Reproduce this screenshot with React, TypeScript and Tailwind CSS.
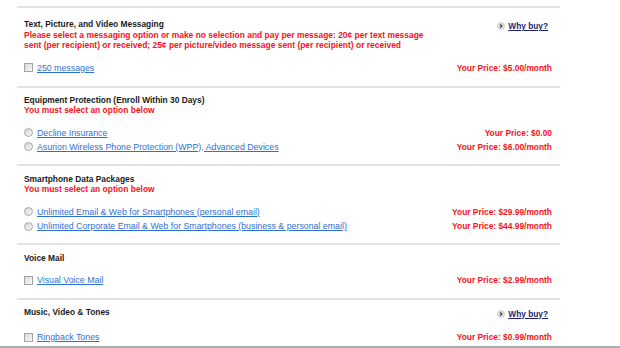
import type { ReactNode } from 'react';

type Option = { label: string; price: string };

type Section = {
  title: string;
  notice?: string[];
  whyBuy?: boolean;
  kind: 'checkbox' | 'radio';
  pad: string;
  rowsMt: string;
  rowsGap: string;
  options: Option[];
};

const sections: Section[] = [
  {
    title: 'Text, Picture, and Video Messaging',
    notice: [
      'Please select a messaging option or make no selection and pay per message: 20¢ per text message',
      'sent (per recipient) or received; 25¢ per picture/video message sent (per recipient) or received',
    ],
    whyBuy: true,
    kind: 'checkbox',
    pad: 'pt-[11px] pb-[12px]',
    rowsMt: 'mt-[11px]',
    rowsGap: 'gap-[2px]',
    options: [{ label: '250 messages', price: 'Your Price: $5.00/month' }],
  },
  {
    title: 'Equipment Protection (Enroll Within 30 Days)',
    notice: ['You must select an option below'],
    kind: 'radio',
    pad: 'pt-[7px] pb-[11px]',
    rowsMt: 'mt-[11px]',
    rowsGap: 'gap-[2px]',
    options: [
      { label: 'Decline Insurance', price: 'Your Price: $0.00' },
      { label: 'Asurion Wireless Phone Protection (WPP), Advanced Devices', price: 'Your Price: $6.00/month' },
    ],
  },
  {
    title: 'Smartphone Data Packages',
    notice: ['You must select an option below'],
    kind: 'radio',
    pad: 'pt-[8px] pb-[11px]',
    rowsMt: 'mt-[11px]',
    rowsGap: 'gap-[2.5px]',
    options: [
      { label: 'Unlimited Email & Web for Smartphones (personal email)', price: 'Your Price: $29.99/month' },
      {
        label: 'Unlimited Corporate Email & Web for Smartphones (business & personal email)',
        price: 'Your Price: $44.99/month',
      },
    ],
  },
  {
    title: 'Voice Mail',
    kind: 'checkbox',
    pad: 'pt-[8px] pb-[11.5px]',
    rowsMt: 'mt-[10.5px]',
    rowsGap: 'gap-[2px]',
    options: [{ label: 'Visual Voice Mail', price: 'Your Price: $2.99/month' }],
  },
  {
    title: 'Music, Video & Tones',
    whyBuy: true,
    kind: 'checkbox',
    pad: 'pt-[7px] pb-[2px]',
    rowsMt: 'mt-[12px]',
    rowsGap: 'gap-[2px]',
    options: [{ label: 'Ringback Tones', price: 'Your Price: $0.99/month' }],
  },
];

function Control({ kind }: { kind: 'checkbox' | 'radio' }) {
  if (kind === 'radio') {
    return (
      <span className="block w-[9px] h-[9px] shrink-0 rounded-full border border-[#a9a9a9] bg-linear-to-br from-[#d6d6d6] to-[#f7f7f7]" />
    );
  }
  return (
    <span className="block w-[9px] h-[9px] shrink-0 border border-[#a4a4a4] bg-linear-to-br from-[#dadada] to-[#f8f8f8]" />
  );
}

function WhyBuy() {
  return (
    <a href="#" className="flex items-center gap-[3px] mt-[2px] mr-[4px]">
      <svg width="8" height="8" viewBox="0 0 8 8">
        <circle cx="4" cy="4" r="3.6" fill="#dedede" stroke="#c4c4c4" strokeWidth="0.6" />
        <path d="M3.1 2.3 L4.9 4 L3.1 5.7" fill="none" stroke="#333" strokeWidth="1.1" />
      </svg>
      <span className="text-[8.3px] leading-[10.5px] font-bold text-[#1e1e74] underline">Why buy?</span>
    </a>
  );
}

function Divider() {
  return <div className="h-[2px] bg-[#e2e2e2]" />;
}

function SectionBlock({ s }: { s: Section }) {
  return (
    <div className={`pl-[7px] pr-[8px] ${s.pad}`}>
      <div className="flex justify-between items-start">
        <div>
          <div className="text-[8.4px] leading-[10.5px] font-bold text-[#1b1b1b] whitespace-nowrap">{s.title}</div>
          {s.notice?.map((line) => (
            <div key={line} className="text-[8.45px] leading-[10.5px] font-bold text-[#f5121a] whitespace-nowrap">
              {line}
            </div>
          ))}
        </div>
        {s.whyBuy && <WhyBuy />}
      </div>
      <div className={`flex flex-col ${s.rowsMt} ${s.rowsGap}`}>
        {s.options.map((o) => (
          <Row key={o.label} kind={s.kind} label={o.label} price={o.price} />
        ))}
      </div>
    </div>
  );
}

function Row({ kind, label, price }: { kind: 'checkbox' | 'radio'; label: ReactNode; price: string }) {
  return (
    <div className="flex items-center justify-between h-[12px]">
      <label className="flex items-center gap-[4px]">
        <Control kind={kind} />
        <a href="#" className="text-[8.8px] leading-[12px] text-[#2f6fd2] underline whitespace-nowrap">
          {label}
        </a>
      </label>
      <span className="text-[8.4px] leading-[12px] font-bold text-[#f5121a] whitespace-nowrap">{price}</span>
    </div>
  );
}

export default function App() {
  return (
    <div className="w-[620px] h-[348px] bg-white flex flex-col overflow-hidden font-['Liberation_Sans',Arial,sans-serif]">
      <div className="flex-1 overflow-hidden pt-[6px]">
        <div className="ml-[17px] w-[543px]">
          {sections.map((s) => (
            <div key={s.title}>
              <Divider />
              <SectionBlock s={s} />
            </div>
          ))}
        </div>
      </div>
      <div className="h-[2px] bg-[#a9aeb4]" />
    </div>
  );
}
